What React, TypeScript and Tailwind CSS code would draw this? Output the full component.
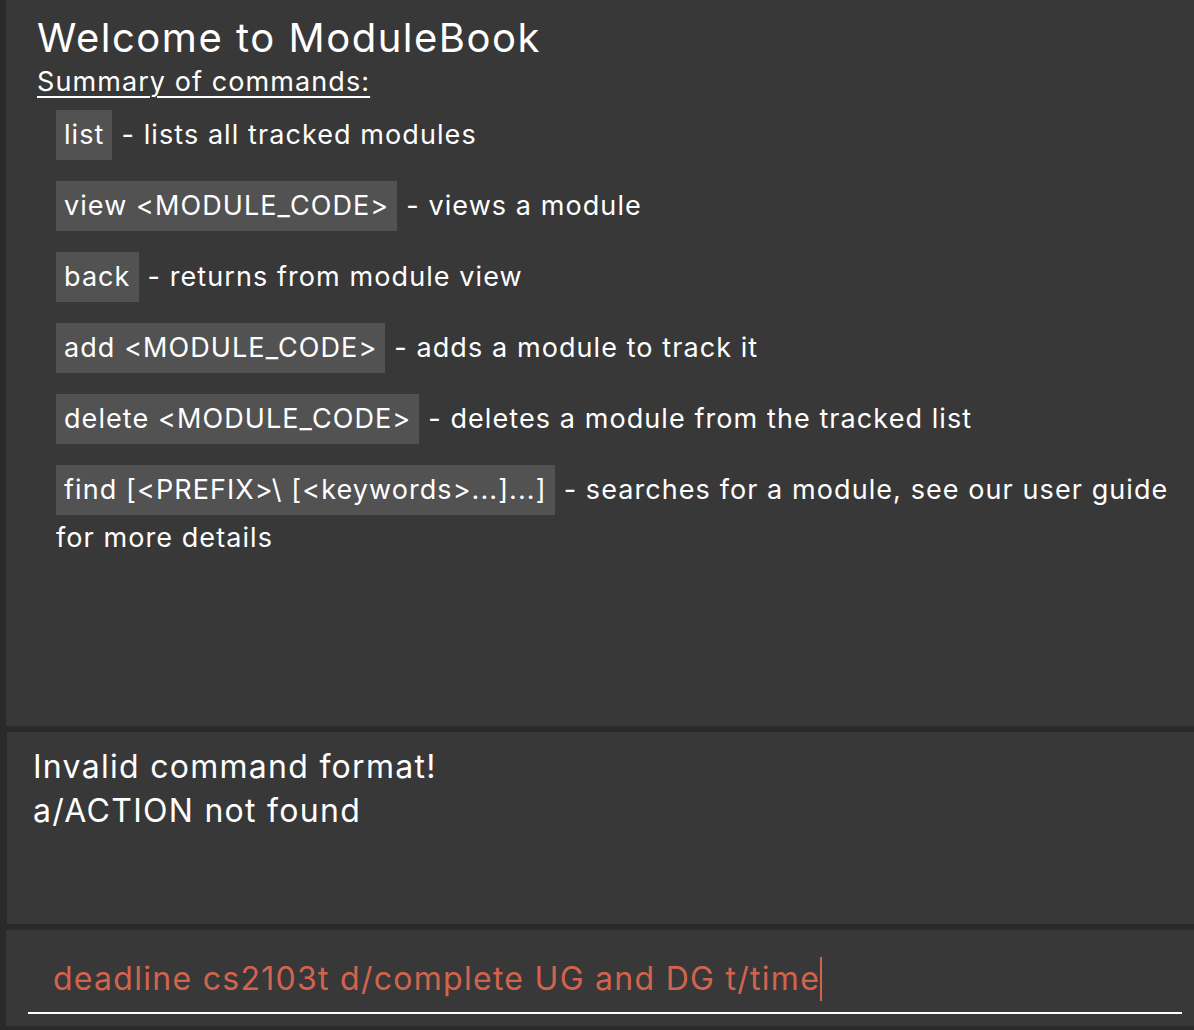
import React from "react";

const cmds: { code: string; desc: string }[] = [
  { code: "list", desc: "- lists all tracked modules" },
  { code: "view <MODULE_CODE>", desc: "- views a module" },
  { code: "back", desc: "- returns from module view" },
  { code: "add <MODULE_CODE>", desc: "- adds a module to track it" },
  { code: "delete <MODULE_CODE>", desc: "- deletes a module from the tracked list" },
];

export default function App() {
  return (
    <div
      className="flex flex-col w-[1194px] h-[1030px] bg-[#2a2a2a] pl-[6px] overflow-hidden text-white"
      style={{ fontFamily: "Inter, 'Noto Sans', sans-serif" }}
    >
      <div className="h-[726px] bg-[#383838] pl-[31px] pr-[10px] pt-[14px]">
        <div className="text-[40px] leading-[48px] tracking-[0.038em]">Welcome to ModuleBook</div>
        <div className="text-[27px] leading-[34px] tracking-[0.04em] underline underline-offset-[5px] decoration-[2px] mt-[3px]">
          Summary of commands:
        </div>
        <div className="pl-[19px] pt-[11px] flex flex-col gap-[21px] text-[27px] tracking-[0.04em]">
          {cmds.map((c) => (
            <div key={c.code} className="flex items-center h-[50px]">
              <span className="bg-[#525252] h-[50px] px-[8px] flex items-center">{c.code}</span>
              <span className="ml-[9px]">{c.desc}</span>
            </div>
          ))}
          <div className="leading-[42px]">
            <span className="bg-[#525252] inline-block h-[50px] leading-[50px] px-[8px] align-middle">
              find [&lt;PREFIX&gt;\ [&lt;keywords&gt;...]...]
            </span>
            <span className="ml-[9px] align-middle">- searches for a module, see our user guide for more details</span>
          </div>
        </div>
      </div>
      <div className="h-[6px]" />
      <div className="h-[192px] bg-[#383838] ml-[1px] pl-[26px] pt-[13px] text-[32px] leading-[44px] tracking-[0.04em]">
        <div>Invalid command format!</div>
        <div>a/ACTION not found</div>
      </div>
      <div className="h-[6px]" />
      <div className="h-[96px] bg-[#383838] pl-[22px] pr-[12px] pt-[20px]">
        <div className="border-b-[2px] border-white h-[64px] pl-[25px] pb-[4px] flex items-center">
          <span className="text-[32px] tracking-[0.04em] text-[#d2644e]">deadline cs2103t d/complete UG and DG t/time</span>
          <span className="inline-block w-[2px] h-[44px] bg-[#d2644e]" />
        </div>
      </div>
    </div>
  );
}
